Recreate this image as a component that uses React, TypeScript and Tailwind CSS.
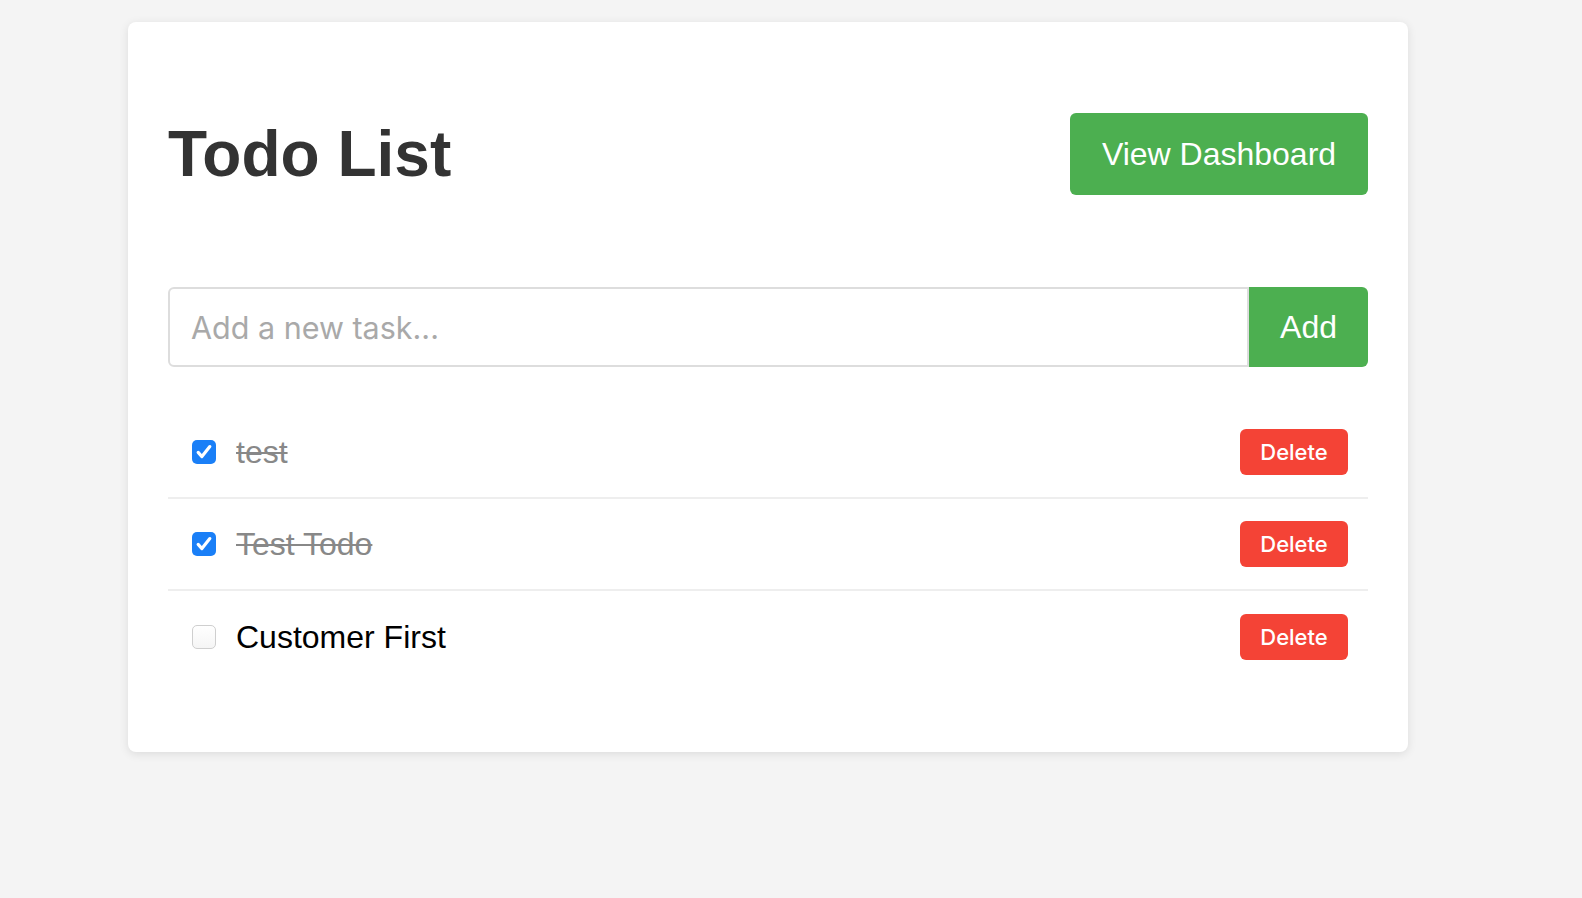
export default function App() {
  const todos = [
    { id: 1, text: 'test', done: true },
    { id: 2, text: 'Test Todo', done: true },
    { id: 3, text: 'Customer First', done: false },
  ]

  return (
    <div className="min-h-[898px] bg-[#f4f4f4] pt-[22px] font-['Liberation_Sans',Arial,sans-serif]">
      <div className="ml-[128px] w-[1280px] rounded-lg bg-white px-10 pt-10 pb-[69px] shadow-[0_2px_10px_rgba(0,0,0,0.1)]">
        {/* Header */}
        <div className="flex h-[184px] items-center justify-between">
          <h1 className="text-[64px] font-bold text-[#333] leading-none">Todo List</h1>
          <button className="flex h-[82px] w-[298px] items-center justify-center rounded-md bg-[#4caf50] text-[32px] text-white">
            View Dashboard
          </button>
        </div>

        {/* Add form */}
        <div className="mt-[41px] flex h-20">
          <input
            type="text"
            placeholder="Add a new task..."
            className="h-20 flex-1 rounded-l-md border-2 border-[#ddd] px-[21px] font-['Inter',sans-serif] text-[30.5px] outline-none placeholder:text-[#a9a9a9]"
          />
          <button className="flex h-20 w-[119px] items-center justify-center rounded-r-md bg-[#4caf50] text-[32px] text-white">
            Add
          </button>
        </div>

        {/* List */}
        <ul className="mt-[40px]">
          {todos.map((todo, i) => (
            <li
              key={todo.id}
              className={
                'flex h-[92px] items-center justify-between px-5 ' +
                (i < todos.length - 1 ? 'border-b-2 border-[#eee]' : '')
              }
            >
              <div className="flex items-center">
                {todo.done ? (
                  <span className="ml-1 flex h-6 w-6 items-center justify-center rounded-[5px] bg-[#1a7ff7]">
                    <svg viewBox="0 0 24 24" className="h-[20px] w-[20px]" fill="none" stroke="white" strokeWidth="3.8" strokeLinecap="round" strokeLinejoin="round">
                      <path d="M5 12.5l4.5 5L19 5.5" />
                    </svg>
                  </span>
                ) : (
                  <span className="ml-1 h-6 w-6 rounded-[5px] border border-[#cfcfcf] bg-gradient-to-b from-white to-[#f5f5f5]" />
                )}
                <span
                  className={
                    'ml-5 text-[32px] ' +
                    (todo.done ? 'text-[#888] line-through decoration-[#888] decoration-2' : 'text-black')
                  }
                >
                  {todo.text}
                </span>
              </div>
              <button className="flex h-[46px] w-[108px] items-center justify-center rounded-md bg-[#f44336] font-['Inter',sans-serif] text-[22px] font-medium text-white">
                Delete
              </button>
            </li>
          ))}
        </ul>
      </div>
    </div>
  )
}
